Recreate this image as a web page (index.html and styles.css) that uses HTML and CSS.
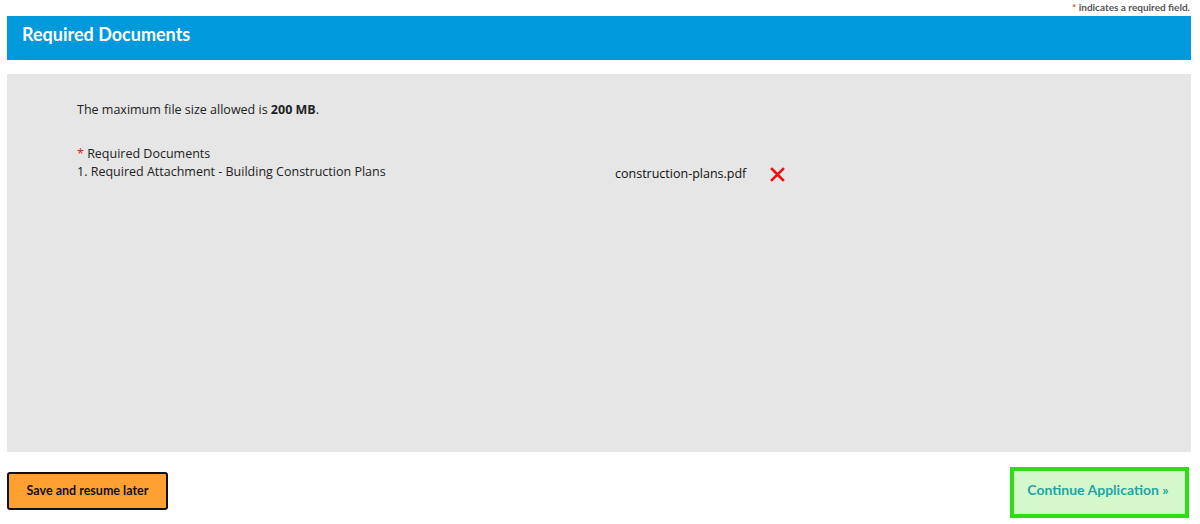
FILE: index.html
```html
<!DOCTYPE html>
<html lang="en">
<head>
  <meta charset="UTF-8" />
  <meta name="viewport" content="width=device-width, initial-scale=1" />
  <title>Required Documents</title>
  <link rel="stylesheet" href="styles.css">
</head>
<body>

  <div class="page">
    <div class="required-note"><span class="star">*</span> indicates a required field.</div>

    <!-- Section header -->
    <div class="section-head">
      <h2>Required Documents</h2>
    </div>

    <!-- Attachment panel -->
    <div class="panel">
      <p class="size-note">The maximum file size allowed is <b>200 MB</b>.</p>

      <div class="doc-list">
        <div class="doc-title"><span class="star red">*</span> Required Documents</div>
        <div class="doc-row">
          <span class="doc-name">1. Required Attachment - Building Construction Plans</span>
          <span class="file-name">construction-plans.pdf</span>
          <button class="remove" title="Remove">
            <svg width="15" height="15" viewBox="0 0 15 15">
              <path d="M2 2 L13 13 M13 2 L2 13" stroke="#F01010" stroke-width="2.6" stroke-linecap="square"/>
            </svg>
          </button>
        </div>
      </div>
    </div>

    <!-- Actions -->
    <div class="actions">
      <button class="btn-save">Save and resume later</button>
      <button class="btn-continue">Continue Application &raquo;</button>
    </div>
  </div>

</body>
</html>
```

FILE: styles.css
```css
body {
  margin: 0;
  padding: 0;
  background-color: #FFFFFF;
  font-family: 'Open Sans', sans-serif;
  color: #222;
}

.page {
  padding: 0 9px 0 7px;
}

.required-note {
  text-align: right;
  font-family: 'Lato', sans-serif;
  font-size: 10px;
  font-weight: bold;
  color: #555;
  height: 16px;
  line-height: 14px;
  padding-right: 1px;
}

.star {
  color: #C0651A;
}

.star.red {
  color: #E8101A;
}

.section-head {
  background-color: #0099DB;
  height: 44px;
  box-sizing: border-box;
  padding: 7px 0 0 15px;
}

.section-head h2 {
  margin: 0;
  color: #FFFFFF;
  font-family: 'Lato', sans-serif;
  font-size: 18px;
  line-height: 22px;
  font-weight: bold;
}

.panel {
  margin-top: 14px;
  background-color: #E6E6E6;
  height: 378px;
  padding: 27px 70px 0;
  box-sizing: border-box;
  font-size: 12.5px;
}

.size-note {
  margin: 0 0 25px;
  line-height: 18px;
}

.size-note b {
  font-weight: bold;
}

.doc-title {
  line-height: 19px;
}

.doc-row {
  display: flex;
  align-items: flex-start;
  line-height: 19px;
  margin-top: -1px;
}

.doc-name {
  width: 538px;
}

.file-name {
  margin-top: 2px;
  color: #111;
}

.remove {
  margin: 5px 0 0 24px;
  padding: 0;
  border: none;
  background: none;
  display: flex;
  cursor: pointer;
}

.actions {
  display: flex;
  justify-content: space-between;
  align-items: flex-start;
}

.btn-save {
  margin-top: 20px;
  width: 161px;
  height: 38px;
  background-color: #FFA033;
  border: 2px solid #111;
  border-radius: 3px;
  font-family: 'Lato', sans-serif;
  font-weight: bold;
  font-size: 12.5px;
  color: #111;
  padding: 0 0 2px;
  cursor: pointer;
}

.btn-continue {
  margin: 15px 2px 0 0;
  width: 179px;
  height: 51px;
  background-color: #D4F8CC;
  border: 4px solid #2EDD12;
  font-family: 'Lato', sans-serif;
  font-weight: bold;
  font-size: 14px;
  color: #1FA5A5;
  padding: 0 3px 6px 0;
  cursor: pointer;
}
```
